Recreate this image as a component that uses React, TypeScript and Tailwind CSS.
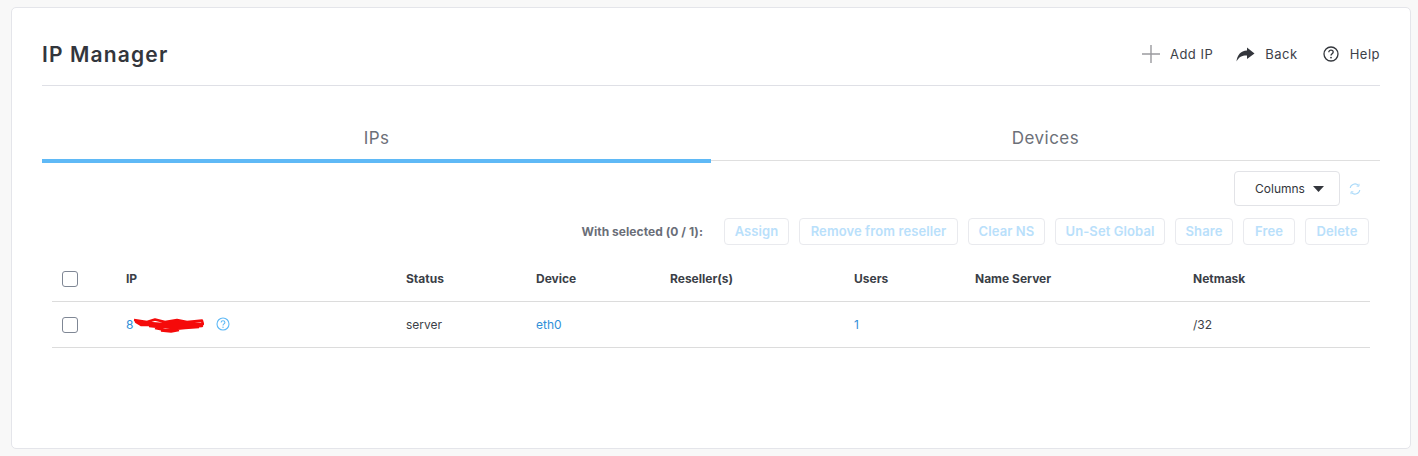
import React from "react";

function Btn({ children, w }: { children: React.ReactNode; w: string }) {
  return (
    <div className={`${w} h-[27px] flex items-center justify-center border border-[#e9eaee] rounded-[4px] text-[13px] font-semibold text-[#b9e0fb] tracking-[0.1px] whitespace-nowrap`}>
      {children}
    </div>
  );
}

function Check() {
  return <div className="w-[16px] h-[16px] border border-[#7f8795] rounded-[3px] bg-white" />;
}

const cols = "grid grid-cols-[74px_280px_130px_134px_184px_121px_218px_1fr]";

export default function App() {
  return (
    <div className="w-[1418px] h-[456px] bg-[#f8f8f8] pt-[7px] pl-[11px] font-['Inter','Liberation_Sans',sans-serif] overflow-hidden">
      <div className="w-[1400px] h-[442px] bg-white border border-[#e4e5ea] rounded-[5px] px-[30px]">
        <div className="h-[78px] border-b border-[#dfe0e6] flex items-center justify-between">
          <h1 className="text-[21px] font-semibold text-[#33363c] tracking-[1.15px] leading-none pt-[15px] h-[50px] flex items-center">IP Manager</h1>
          <div className="flex items-center text-[13px] text-[#3d4148] tracking-[0.5px] pt-[15px]">
            <svg width="20" height="20" viewBox="0 0 20 20" className="mr-[9px]"><path d="M10 1v18M1 10h18" stroke="#9a9a9e" strokeWidth="1.4" fill="none" /></svg>
            <span className="mr-[23px] pt-[1px]">Add IP</span>
            <svg width="19" height="15" viewBox="0 0 19 15" className="mr-[10px]"><path d="M11 0.5 L18.5 6.5 L11 12 L11 8.6 C6.5 8.4 3 9.8 0.5 14.5 C1 8.5 4.5 4 11 3.6 Z" fill="#33363c" /></svg>
            <span className="mr-[25px] pt-[1px]">Back</span>
            <svg width="16" height="16" viewBox="0 0 16 16" className="mr-[11px]"><circle cx="8" cy="8" r="7" stroke="#33363c" strokeWidth="1.3" fill="none" /><path d="M5.8 6.2c0-1.3 1-2.1 2.2-2.1s2.2.8 2.2 2c0 1.8-2.2 1.7-2.2 3.5" stroke="#33363c" strokeWidth="1.3" fill="none" /><circle cx="8" cy="11.6" r="0.9" fill="#33363c" /></svg>
            <span className="pt-[1px]">Help</span>
          </div>
        </div>

        <div className="grid grid-cols-2 h-[75px] border-b border-[#dfdfdf] text-[17px] text-[#6c7078] tracking-[0.45px]">
          <div className="h-[77px] border-b-4 border-[#5fb9f6] pt-[40px] text-center leading-[24px]">IPs</div>
          <div className="pt-[40px] text-center leading-[24px]">Devices</div>
        </div>

        <div className="flex justify-end items-center mt-[10px] h-[35px] pr-[19px]">
          <div className="w-[106px] h-[35px] pl-[5px] border border-[#e2e3e7] rounded-[4px] flex items-center justify-center gap-[8px] text-[12px] text-[#33363c]">
            <span className="pt-[1px]">Columns</span>
            <svg width="11" height="6" viewBox="0 0 11 6"><path d="M0 0h11L5.5 6z" fill="#33363c" /></svg>
          </div>
          <svg width="12" height="12" viewBox="0 0 12 12" className="ml-[9px]"><path d="M1.2 5A4.8 4.8 0 0 1 9.4 2.4M10.8 7A4.8 4.8 0 0 1 2.6 9.6" stroke="#a9d9f9" strokeWidth="1.1" fill="none" /><path d="M10 0.8v2.4H7.6M2 11.2V8.8h2.4" stroke="#a9d9f9" strokeWidth="0.9" fill="none" /></svg>
        </div>

        <div className="flex justify-end items-center gap-[10px] mt-[12px] h-[27px] pr-[11px]">
          <span className="text-[12px] font-bold text-[#6a6e78] tracking-[0.05px] mr-[11px]">With selected (0 / 1):</span>
          <Btn w="w-[65px]">Assign</Btn>
          <Btn w="w-[159px]">Remove from reseller</Btn>
          <Btn w="w-[77px]">Clear NS</Btn>
          <Btn w="w-[110px]">Un-Set Global</Btn>
          <Btn w="w-[58px]">Share</Btn>
          <Btn w="w-[52px]">Free</Btn>
          <Btn w="w-[64px]">Delete</Btn>
        </div>

        <div className="ml-[10px] mr-[10px] mt-[11px] text-[12px]">
          <div className={`${cols} h-[46px] items-center border-b border-[#dcdcdc] font-bold text-[#3b3f47]`}>
            <div className="pl-[10px]"><Check /></div>
            <div>IP</div>
            <div>Status</div>
            <div>Device</div>
            <div>Reseller(s)</div>
            <div>Users</div>
            <div>Name Server</div>
            <div>Netmask</div>
          </div>
          <div className={`${cols} h-[46px] items-center border-b border-[#dcdcdc] text-[#3b3f47]`}>
            <div className="pl-[10px]"><Check /></div>
            <div className="flex items-center text-[#2f8fd8]">
              <span>8</span>
              <svg width="71" height="16" viewBox="0 0 71 16"><path d="M1 3 L14 5 L22 2.5 L32 5 L44 3 L54 5 L69 3.5 L70 7 L58 6 L44 5.5 L30 7 L16 6 L3 5 L8 8 L22 8 L36 8 L50 8 L64 7 L69 9 L54 10 L40 10 L26 10 L16 9 M22 11 L32 13 L42 12 L52 11 L66 10 M28 13.5 L38 14.5 L46 13" fill="none" stroke="#f50a0a" strokeWidth="2.4" strokeLinejoin="round" /></svg>
              <svg width="14" height="14" viewBox="0 0 14 14" className="ml-[12px] -mt-[2px]"><circle cx="7" cy="7" r="6" stroke="#5fb9f6" strokeWidth="1.1" fill="none" /><path d="M5.1 5.5c0-1.1.9-1.8 1.9-1.8s1.9.7 1.9 1.7c0 1.5-1.9 1.5-1.9 3" stroke="#5fb9f6" strokeWidth="1.1" fill="none" /><circle cx="7" cy="10.2" r="0.7" fill="#5fb9f6" /></svg>
            </div>
            <div>server</div>
            <div className="text-[#2f8fd8]">eth0</div>
            <div></div>
            <div className="text-[#2f8fd8]">1</div>
            <div></div>
            <div>/32</div>
          </div>
        </div>
      </div>
    </div>
  );
}
